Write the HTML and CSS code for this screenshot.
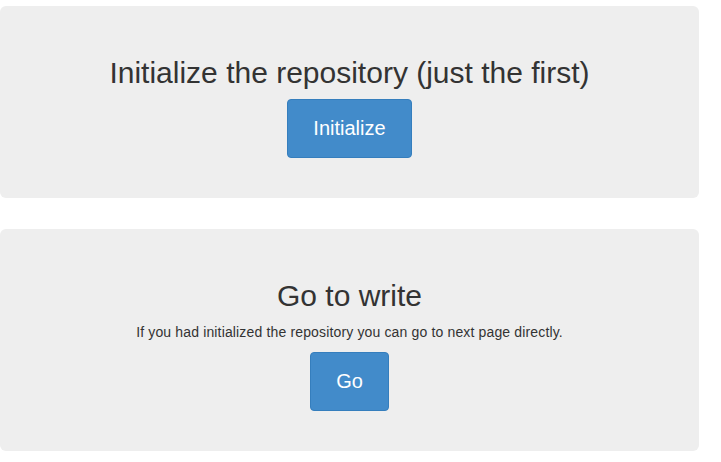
FILE: index.html
```html
<!DOCTYPE html>
<html lang="en">
<head>
    <meta charset="UTF-8">
    <meta name="viewport" content="width=device-width, initial-scale=1.0">
    <title>Repository</title>
    <link rel="stylesheet" href="styles.css">
</head>
<body>
    <div class="container">
        <!-- Init the repo -->
        <div class="jumbotron">
            <h2>Initialize the repository (just the first)</h2>
            <p><a href="#" class="btn btn-primary">Initialize</a></p>
        </div>
        <!-- Skip to the editor -->
        <div class="jumbotron">
            <h2>Go to write</h2>
            <p class="hint">If you had initialized the repository you can go to next page directly.</p>
            <p><a href="#" class="btn btn-primary">Go</a></p>
        </div>
    </div>
</body>
</html>
```

FILE: styles.css
```css
body {
    font-family: "Liberation Sans", Arial, sans-serif;
    font-size: 14px;
    line-height: 20px;
    color: #333;
    margin: 0;
    padding: 6px 0 0 0;
    background: #fff;
}

.container {
    width: 699px;
}

.jumbotron {
    background-color: #eee;
    border-radius: 6px;
    padding: 30px 0;
    margin-bottom: 31px;
    text-align: center;
}

h2 {
    font-size: 30px;
    font-weight: 500;
    line-height: 33px;
    margin: 20px 0 10px;
}

p {
    margin: 0 0 10px;
}

.hint {
    letter-spacing: 0.15px;
}

.btn {
    display: inline-block;
    padding: 15px 25px;
    font-size: 20px;
    line-height: 27px;
    border: 1px solid #357ebd;
    border-radius: 4px;
    text-decoration: none;
}

.btn-primary {
    background-color: #428bca;
    color: #fff;
}

.btn-primary:hover {
    background-color: #3276b1;
}
```
